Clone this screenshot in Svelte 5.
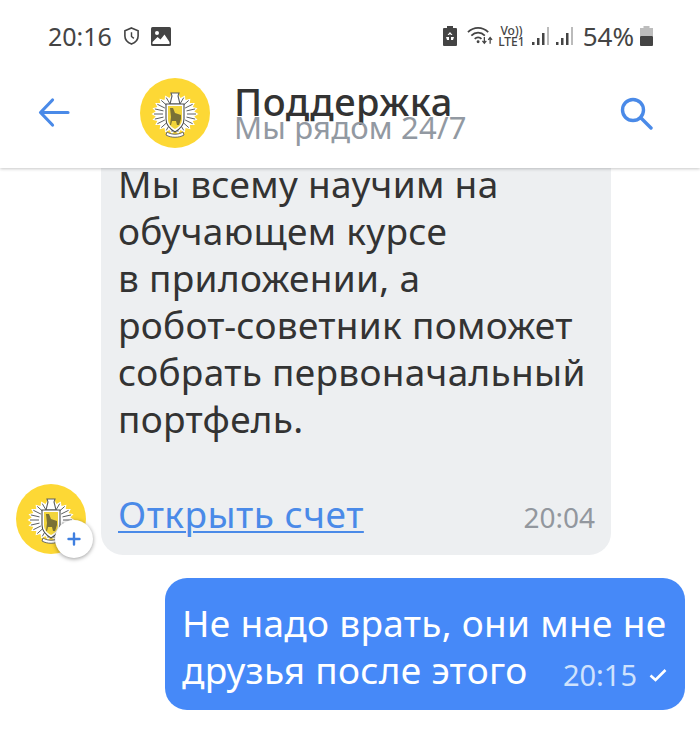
<script>
	const signals = [0, 1];

	// spiky wreath around the shield: outline and the fine leaf veins
	const spikes = Array.from({ length: 44 }, (_, i) => {
		const a = (i / 44) * Math.PI * 2;
		const r = i % 2 ? 19.5 : 23.5;
		return `${(35 + Math.cos(a) * r).toFixed(1)},${(36 + Math.sin(a) * r * 0.86).toFixed(1)}`;
	}).join(' ');
	const veins = Array.from({ length: 22 }, (_, i) => {
		const a = (i / 22) * Math.PI * 2;
		return {
			x1: 35 + Math.cos(a) * 12,
			y1: 36 + Math.sin(a) * 11,
			x2: 35 + Math.cos(a) * 21,
			y2: 36 + Math.sin(a) * 18
		};
	});
</script>

{#snippet crest()}
	<svg viewBox="0 0 70 70" class="crest">
		<polygon points={spikes} fill="#fff" />
		{#each veins as v}
			<line x1={v.x1} y1={v.y1} x2={v.x2} y2={v.y2} stroke="#5c5f60" stroke-width="1" />
		{/each}
		<path d="M31 15h8l-1 3 2 8H30l2-8z" fill="#fff" stroke="#5c5f60" stroke-width="1.100" />
		<path d="M27 54c5 3 11 3 16 0l1 3c-5 3-13 3-18 0z" fill="#fff" stroke="#5c5f60" stroke-width="0.900" />
		<path d="M26 26h18v15c0 6-4 10-9 13-5-3-9-7-9-13z" fill="#fff" stroke="#4a4d4e" stroke-width="1.100" />
		<path d="M28 28h14v13c0 5-3 8-7 10-4-2-7-5-7-10z" fill="#f2d53c" />
		<path d="M30 30h3l2 5 6 2v4l-2 6h-2l-1-4h-4l-1 4h-1l1-8z" fill="#7a7136" />
	</svg>
{/snippet}

<div class="phone">
	<header>
		<div class="status">
			<div class="status-left">
				<span class="clock">20:16</span>
				<svg viewBox="0 0 18 20" width="17" height="20">
					<path d="M9 1.500 16 4.500V10c0 4-3 7-7 8.500C5 17 2 14 2 10V4.500z" fill="none" stroke="#444" stroke-width="1.700" />
					<path d="M9 6v4.500l2.500 2" fill="none" stroke="#444" stroke-width="1.500" />
				</svg>
				<svg viewBox="0 0 20 19" width="20" height="19">
					<rect width="20" height="19" rx="1.500" fill="#444" />
					<circle cx="6" cy="6" r="2" fill="#fff" />
					<path d="M1.500 15l5-5 3 2.500 4-5 5 7.500v2h-17z" fill="#fff" />
				</svg>
			</div>
			<div class="status-right">
				<svg viewBox="0 0 14 20" width="14" height="20">
					<path d="M4 0h6v2h3a1 1 0 0 1 1 1v16a1 1 0 0 1-1 1H1a1 1 0 0 1-1-1V3a1 1 0 0 1 1-1h3z" fill="#444" />
					<path d="M7 6l2.500 3H8l-1-1-1 1H4.500zM3 11h3v3H4zM8 11h3l-1 3H8z" fill="#fff" />
				</svg>
				<svg viewBox="0 0 28 20" width="27" height="20" class="wifi">
					<g fill="none" stroke="#444" stroke-width="1.800">
						<path d="M1 6c6-6 15-6 21 0M4.500 9.500c4-4 10-4 14 0M8 13c2-2 5-2 7 0" />
					</g>
					<circle cx="11.500" cy="16" r="1.500" fill="#444" />
					<path d="M18 11v6m-2-2 2 2.500 2-2.500M24 18v-6m-2 2 2-2.500 2 2.500" fill="none" stroke="#444" stroke-width="1.300" />
				</svg>
				<span class="volte"><span>Vo))</span><span>LTE1</span></span>
				{#each signals as s (s)}
					<svg viewBox="0 0 17 18" width="17" height="18" class="bars">
						<rect x="0" y="15" width="2.500" height="3" fill="#444" />
						<rect x="5" y="11" width="2.500" height="7" fill="#444" />
						<rect x="10" y="6" width="2.500" height="12" fill="#444" />
						<rect x="15" y="0" width="2" height="18" fill="#bbb" />
					</svg>
				{/each}
				<span class="percent">54%</span>
				<svg viewBox="0 0 13 20" width="13" height="20">
					<path d="M3.500 0h6v2H13v8H0V2h3.500z" fill="#bdbdbd" />
					<rect y="10" width="13" height="10" rx="1" fill="#444" />
				</svg>
			</div>
		</div>
		<div class="toolbar">
			<button class="icon-btn" aria-label="Назад">
				<svg viewBox="0 0 32 32" width="32" height="32">
					<path d="M30 15.500H3M14.500 3 2.500 15.500 14.500 28" fill="none" stroke="#4a8ae8" stroke-width="3.200" stroke-linecap="round" stroke-linejoin="round" />
				</svg>
			</button>
			<div class="avatar large">{@render crest()}</div>
			<div class="titles">
				<div class="title">Поддержка</div>
				<div class="subtitle">Мы рядом 24/7</div>
			</div>
			<button class="icon-btn search" aria-label="Поиск">
				<svg viewBox="0 0 34 34" width="34" height="34">
					<circle cx="14" cy="14" r="10.500" fill="none" stroke="#4a8ae8" stroke-width="3.400" />
					<path d="M22 22l10 10" stroke="#4a8ae8" stroke-width="3.400" stroke-linecap="round" />
				</svg>
			</button>
		</div>
	</header>

	<main class="chat">
		<div class="row in">
			<div class="avatar-wrap">
				<div class="avatar small">{@render crest()}</div>
				<span class="plus">
					<svg viewBox="0 0 14 14" width="14" height="14">
						<path d="M7 1.500v11M1.500 7h11" stroke="#3f7fe0" stroke-width="2.400" stroke-linecap="round" />
					</svg>
				</span>
			</div>
			<div class="bubble incoming">
				<p>Мы всему научим на<br />обучающем курсе<br />в приложении, а<br />робот-советник поможет<br />собрать первоначальный<br />портфель.</p>
				<div class="foot">
					<span class="link">Открыть счет</span>
					<span class="time">20:04</span>
				</div>
			</div>
		</div>

		<div class="row out">
			<div class="bubble outgoing">
				<p>Не надо врать, они мне не<br />друзья после этого</p>
				<span class="stamp">
					20:15
					<svg viewBox="0 0 18 14" width="18" height="14">
						<path d="M1.500 7.500 6.500 12 16.500 2" fill="none" stroke="#fff" stroke-width="2.600" />
					</svg>
				</span>
			</div>
		</div>
	</main>
</div>

<style>
	:global(body) {
		background: #fff;
	}

	.phone {
		display: flex;
		flex-direction: column;
		width: 700px;
		height: 736px;
		overflow: hidden;
		background: #fff;
		font-family: 'Noto Sans', Roboto, sans-serif;
	}

	header {
		position: relative;
		z-index: 2;
		flex: none;
		height: 168px;
		background: #fff;
		box-shadow: 0 1px 3px rgba(0, 0, 0, 0.22);
	}

	.status {
		display: flex;
		justify-content: space-between;
		align-items: center;
		height: 72px;
		padding: 0 47px 0 48px;
		color: #444;
	}

	.status-left,
	.status-right {
		display: flex;
		align-items: center;
	}

	.status-left {
		gap: 11px;
	}

	.clock {
		font-size: 25px;
	}

	.status-right {
		gap: 4px;
	}

	.percent {
		font-size: 26px;
		margin: 0 2px 0 6px;
	}

	.wifi {
		margin-left: 6px;
	}

	.bars {
		margin-left: 3px;
	}

	.volte {
		display: flex;
		flex-direction: column;
		align-items: center;
		font-size: 12px;
		line-height: 11px;
		font-weight: 500;
	}

	.toolbar {
		display: flex;
		align-items: center;
		height: 96px;
		padding-left: 38px;
		padding-bottom: 14px;
		box-sizing: border-box;
	}

	.icon-btn {
		display: flex;
		padding: 0;
		border: 0;
		background: none;
	}

	.avatar {
		display: flex;
		flex: none;
		border-radius: 50%;
		background: #fdd835;
	}

	.crest {
		width: 100%;
		height: 100%;
	}

	.large {
		width: 70px;
		height: 70px;
		margin-left: 70px;
	}

	.titles {
		flex: 1;
		margin-left: 24px;
	}

	.title {
		font-size: 38px;
		font-weight: 500;
		line-height: 27px;
		letter-spacing: 0.5px;
		color: #333;
	}

	.subtitle {
		font-size: 31px;
		line-height: 24px;
		letter-spacing: 0.2px;
		color: #9299a2;
	}

	.search {
		margin-right: 47px;
	}

	.chat {
		display: flex;
		flex: 1;
		flex-direction: column;
		justify-content: flex-end;
		gap: 23px;
		min-height: 0;
		padding: 0 15px 26px 16px;
	}

	.row {
		display: flex;
		flex: none;
		align-items: flex-end;
	}

	.row.out {
		justify-content: flex-end;
	}

	.avatar-wrap {
		position: relative;
		flex: none;
		width: 70px;
		margin: 0 15px 1px 0;
	}

	.small {
		width: 70px;
		height: 70px;
	}

	.plus {
		position: absolute;
		right: -7px;
		bottom: -4px;
		display: flex;
		align-items: center;
		justify-content: center;
		width: 38px;
		height: 38px;
		border-radius: 50%;
		background: #fff;
		box-shadow: 0 1px 4px rgba(0, 0, 0, 0.4);
	}

	.bubble {
		box-sizing: border-box;
		border-radius: 22px;
	}

	.bubble p {
		margin: 0;
		font-size: 37px;
		line-height: 47px;
		letter-spacing: 0.3px;
	}

	.incoming {
		width: 510px;
		padding: 40px 16px 18px 17px;
		background: #edeff1;
		color: #333;
	}

	.foot {
		display: flex;
		justify-content: space-between;
		align-items: baseline;
		margin-top: 49px;
	}

	.link {
		font-size: 37px;
		line-height: 46px;
		letter-spacing: 0.5px;
		color: #4a8ae8;
		text-decoration: underline;
		text-decoration-thickness: 2px;
		text-underline-offset: 3px;
	}

	.time {
		font-size: 28px;
		color: #92979e;
	}

	.outgoing {
		position: relative;
		width: 520px;
		padding: 21px 16px 17px 17px;
		background: #4689f8;
		color: #fff;
	}

	.stamp {
		position: absolute;
		right: 18px;
		bottom: 19px;
		display: flex;
		align-items: center;
		gap: 12px;
		font-size: 29px;
		line-height: 32px;
		color: #cfe2fd;
	}
</style>
